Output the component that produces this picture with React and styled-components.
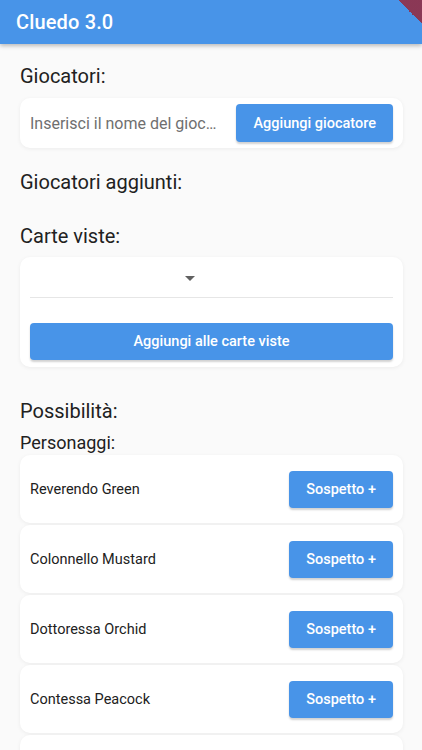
import React, { useState } from "react";
import styled, { createGlobalStyle } from "styled-components";

const GlobalStyle = createGlobalStyle`
  html, body {
    margin: 0;
    padding: 0;
    background: #fafafa;
    font-family: Roboto, "Noto Sans", sans-serif;
    color: #212121;
  }
  * { box-sizing: border-box; }
`;

const blue = "#4894e8";

const Screen = styled.div`
  position: relative;
  width: 422px;
  height: 750px;
  overflow: hidden;
  background: #fafafa;
`;

const AppBar = styled.header`
  height: 44px;
  background: ${blue};
  display: flex;
  align-items: center;
  padding: 0 16px;
  box-shadow: 0 2px 4px rgba(0, 0, 0, 0.25);
  position: relative;
  z-index: 2;
`;

const Title = styled.h1`
  margin: 0;
  font-size: 20px;
  font-weight: 500;
  color: #fff;
  letter-spacing: 0.15px;
`;

// corner of the debug ribbon, lies over the app bar
const DebugCorner = styled.div`
  position: absolute;
  top: 0;
  right: 0;
  width: 24px;
  height: 24px;
  background: linear-gradient(
    45deg,
    transparent 50%,
    rgba(150, 40, 60, 0.85) 50%
  );
  z-index: 3;
`;

const Body = styled.main`
  padding: 20px 19px 0 20px;
  display: flex;
  flex-direction: column;
`;

const Heading = styled.h2`
  margin: 0;
  font-size: ${(p) => p.size || 20}px;
  font-weight: 400;
  line-height: ${(p) => p.lh || 24}px;
  color: #212121;
  margin-bottom: ${(p) => p.mb || 0}px;
`;

const Card = styled.div`
  background: #fff;
  border-radius: 10px;
  box-shadow: 0 1px 4px rgba(0, 0, 0, 0.06);
  padding: ${(p) => p.pad || "6px 10px"};
  margin-bottom: ${(p) => p.mb || 0}px;
`;

const InputRow = styled.div`
  display: flex;
  align-items: center;
  gap: 14px;
`;

const NameInput = styled.input`
  flex: 1;
  min-width: 0;
  border: none;
  outline: none;
  background: transparent;
  font-family: inherit;
  font-size: 16px;
  color: #212121;
  padding: 0;
  text-overflow: ellipsis;
  &::placeholder {
    color: #6f6f6f;
  }
`;

const Button = styled.button`
  background: ${blue};
  color: #fff;
  border: none;
  border-radius: 4px;
  height: ${(p) => p.h || 38}px;
  width: ${(p) => (p.full ? "100%" : "auto")};
  padding: 0 ${(p) => p.px || 16}px;
  font-family: inherit;
  font-size: ${(p) => p.fs || 14.5}px;
  font-weight: 500;
  box-shadow: 0 2px 2px rgba(0, 0, 0, 0.18);
  cursor: pointer;
  flex-shrink: 0;
`;

const Select = styled.div`
  height: 41px;
  border-bottom: 1px solid #e6e6e6;
  display: flex;
  align-items: center;
  justify-content: center;
  padding-right: 44px;
  margin-bottom: 25px;
`;

const Caret = styled.span`
  width: 0;
  height: 0;
  border-left: 5px solid transparent;
  border-right: 5px solid transparent;
  border-top: 5px solid #616161;
  margin-top: 2px;
`;

const List = styled.div`
  display: flex;
  flex-direction: column;
  gap: 2px;
`;

const Row = styled.div`
  background: #fff;
  border-radius: 10px;
  box-shadow: 0 1px 4px rgba(0, 0, 0, 0.06);
  height: 68px;
  display: flex;
  align-items: center;
  justify-content: space-between;
  padding: 0 10px;
`;

const RowLabel = styled.span`
  font-size: 14.5px;
  color: #212121;
`;

const characters = [
  "Reverendo Green",
  "Colonnello Mustard",
  "Dottoressa Orchid",
  "Contessa Peacock",
  "Professor Plum",
];

export default function App() {
  const [name, setName] = useState("");

  return (
    <Screen>
      <GlobalStyle />
      <AppBar>
        <Title>Cluedo 3.0</Title>
      </AppBar>
      <DebugCorner />
      <Body>
        <Heading mb={10}>Giocatori:</Heading>
        <Card pad="6px 10px" mb={22}>
          <InputRow>
            <NameInput
              value={name}
              onChange={(e) => setName(e.target.value)}
              placeholder="Inserisci il nome del giocatore"
            />
            <Button h={38} px={17}>Aggiungi giocatore</Button>
          </InputRow>
        </Card>
        <Heading mb={30}>Giocatori aggiunti:</Heading>
        <Heading mb={9}>Carte viste:</Heading>
        <Card pad="0 10px 7px" mb={32}>
          <Select>
            <Caret />
          </Select>
          <Button full h={37}>Aggiungi alle carte viste</Button>
        </Card>
        <Heading mb={10}>Possibilità:</Heading>
        <Heading size={18} lh={20} mb={2}>Personaggi:</Heading>
        <List>
          {characters.map((c) => (
            <Row key={c}>
              <RowLabel>{c}</RowLabel>
              <Button h={37} px={17}>Sospetto +</Button>
            </Row>
          ))}
        </List>
      </Body>
    </Screen>
  );
}
